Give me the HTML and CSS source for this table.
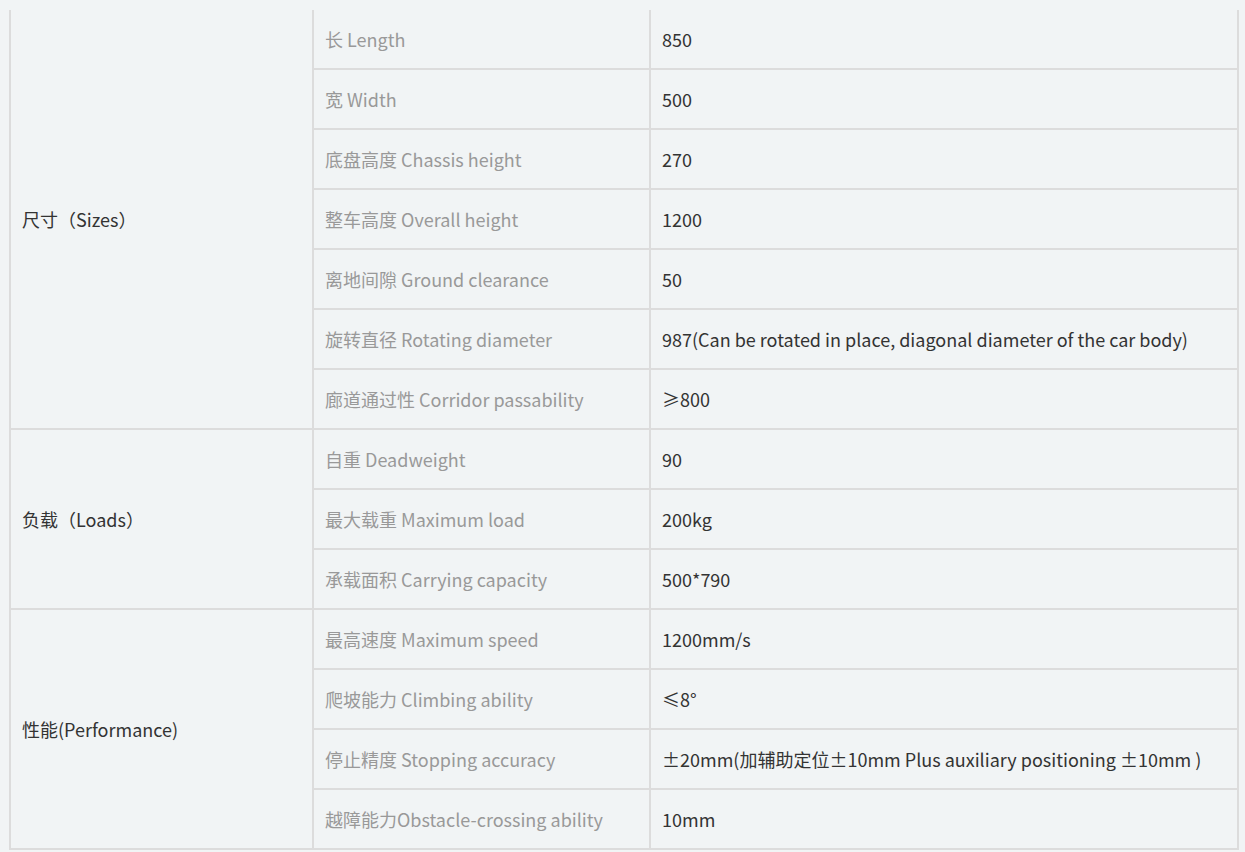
FILE: index.html
```html
<!DOCTYPE html>
<html>
<head>
<meta charset="utf-8">
<link rel="stylesheet" href="styles.css">
</head>
<body>
<table class="spec">
  <colgroup><col class="c1"><col class="c2"><col class="c3"></colgroup>
  <tbody>
    <tr><td class="group" rowspan="7">尺寸（Sizes）</td><td class="name">长 Length</td><td class="val">850</td></tr>
    <tr><td class="name">宽 Width</td><td class="val">500</td></tr>
    <tr><td class="name">底盘高度 Chassis height</td><td class="val">270</td></tr>
    <tr><td class="name">整车高度 Overall height</td><td class="val">1200</td></tr>
    <tr><td class="name">离地间隙 Ground clearance</td><td class="val">50</td></tr>
    <tr><td class="name">旋转直径 Rotating diameter</td><td class="val">987(Can be rotated in place, diagonal diameter of the car body)</td></tr>
    <tr><td class="name">廊道通过性 Corridor passability</td><td class="val">≥800</td></tr>
    <tr><td class="group" rowspan="3">负载（Loads）</td><td class="name">自重 Deadweight</td><td class="val">90</td></tr>
    <tr><td class="name">最大载重 Maximum load</td><td class="val">200kg</td></tr>
    <tr><td class="name">承载面积 Carrying capacity</td><td class="val">500*790</td></tr>
    <tr><td class="group" rowspan="4">性能(Performance)</td><td class="name">最高速度 Maximum speed</td><td class="val">1200mm/s</td></tr>
    <tr><td class="name">爬坡能力 Climbing ability</td><td class="val">≤8°</td></tr>
    <tr><td class="name">停止精度 Stopping accuracy</td><td class="val">±20mm(加辅助定位±10mm Plus auxiliary positioning ±10mm )</td></tr>
    <tr><td class="name">越障能力Obstacle-crossing ability</td><td class="val">10mm</td></tr>
  </tbody>
</table>
</body>
</html>
```
FILE: styles.css
```css
html, body {
  margin: 0;
  padding: 0;
  background: #f1f4f5;
}
body {
  padding: 10px 8px 0 9px;
  font-family: "Noto Sans CJK SC", "Noto Sans", sans-serif;
  font-size: 18px;
}
.spec {
  border-collapse: collapse;
  width: 1228px;
  table-layout: fixed;
}
.c1 { width: 303px; }
.c2 { width: 337px; }
.c3 { width: 588px; }
.spec td {
  border: 2px solid #dcdcdc;
  height: 58px;
  padding: 0 11px;
  vertical-align: middle;
  line-height: 24px;
}
.spec tr:first-child td { border-top: none; }
.group { color: #333; }
.name { color: #999; }
.val { color: #333; }
```
